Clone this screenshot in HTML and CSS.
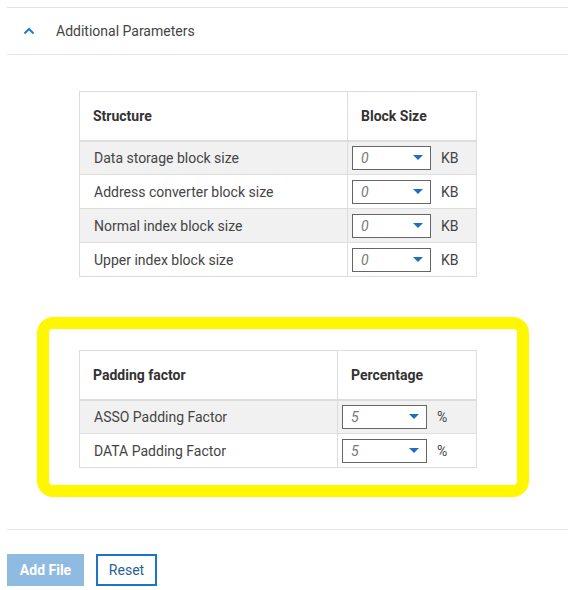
FILE: index.html
```html
<!DOCTYPE html>
<html lang="en">
<head>
    <meta charset="UTF-8">
    <title>Additional Parameters</title>
    <link rel="stylesheet" href="styles.css">
</head>
<body>
    <div class="panel">
        <!-- Section header -->
        <div class="section-head">
            <span class="chevron">
                <svg width="12" height="8" viewBox="0 0 12 8"><path d="M1.5 6.5 L6 2 L10.5 6.5" fill="none" stroke="#1e7bd0" stroke-width="2"/></svg>
            </span>
            <span class="section-title">Additional Parameters</span>
        </div>

        <div class="section-body">
            <!-- Block size table -->
            <table class="param-table block-table">
                <thead>
                    <tr><th class="col-name">Structure</th><th>Block Size</th></tr>
                </thead>
                <tbody>
                    <tr>
                        <td>Data storage block size</td>
                        <td><div class="cell-input"><div class="select"><span>0</span><i class="caret"></i></div><span class="unit">KB</span></div></td>
                    </tr>
                    <tr>
                        <td>Address converter block size</td>
                        <td><div class="cell-input"><div class="select"><span>0</span><i class="caret"></i></div><span class="unit">KB</span></div></td>
                    </tr>
                    <tr>
                        <td>Normal index block size</td>
                        <td><div class="cell-input"><div class="select"><span>0</span><i class="caret"></i></div><span class="unit">KB</span></div></td>
                    </tr>
                    <tr>
                        <td>Upper index block size</td>
                        <td><div class="cell-input"><div class="select"><span>0</span><i class="caret"></i></div><span class="unit">KB</span></div></td>
                    </tr>
                </tbody>
            </table>

            <!-- Padding factor table (highlighted) -->
            <div class="highlight">
                <table class="param-table padding-table">
                    <thead>
                        <tr><th class="col-name">Padding factor</th><th>Percentage</th></tr>
                    </thead>
                    <tbody>
                        <tr>
                            <td>ASSO Padding Factor</td>
                            <td><div class="cell-input"><div class="select wide"><span>5</span><i class="caret"></i></div><span class="unit">%</span></div></td>
                        </tr>
                        <tr>
                            <td>DATA Padding Factor</td>
                            <td><div class="cell-input"><div class="select wide"><span>5</span><i class="caret"></i></div><span class="unit">%</span></div></td>
                        </tr>
                    </tbody>
                </table>
            </div>
        </div>

        <div class="actions">
            <button type="button" class="btn btn-primary">Add File</button>
            <button type="button" class="btn btn-outline">Reset</button>
        </div>
    </div>
</body>
</html>
```

FILE: styles.css
```css
* {
    margin: 0;
    padding: 0;
    box-sizing: border-box;
}

body {
    font-family: Roboto, "Liberation Sans", Arial, sans-serif;
    background: #fff;
    color: #444;
}

.panel {
    margin: 7px 0 0 7px;
}

.section-head {
    display: flex;
    align-items: center;
    height: 48px;
    border-top: 1px solid #e3e3e3;
    border-bottom: 1px solid #e3e3e3;
}

.chevron {
    display: flex;
    width: 49px;
    padding-left: 16px;
}

.section-title {
    font-size: 14px;
    color: #444;
}

.section-body {
    padding: 36px 0 32px;
    border-bottom: 1px solid #e3e3e3;
}

.param-table {
    border-collapse: collapse;
    border: 1px solid #ddd;
    font-size: 14px;
    margin-left: 72px;
    width: 398px;
}

.param-table th {
    height: 49px;
    text-align: left;
    font-weight: bold;
    color: #333;
    padding: 0 13px;
    border-left: 1px solid #ddd;
    border-bottom: 2px solid #ddd;
}

.param-table td {
    height: 34px;
    padding: 0 14px;
    border-left: 1px solid #ddd;
    border-bottom: 1px solid #ddd;
}

.param-table td + td {
    padding: 0 4px;
}

.param-table tbody tr:nth-child(odd) {
    background: #f1f1f1;
}

.block-table .col-name {
    width: 268px;
}

.padding-table .col-name {
    width: 258px;
}

.cell-input {
    display: flex;
    align-items: center;
}

.select {
    display: flex;
    align-items: center;
    justify-content: space-between;
    width: 79px;
    height: 24px;
    padding: 0 7px 0 8px;
    border: 1px solid #666;
    background: #fff;
    font-style: italic;
    color: #777;
    font-size: 14px;
}

.select.wide {
    width: 85px;
}

.caret {
    width: 0;
    height: 0;
    border-left: 5px solid transparent;
    border-right: 5px solid transparent;
    border-top: 5px solid #1e6fc0;
}

.unit {
    margin-left: 10px;
    color: #444;
}

.highlight {
    margin: 40px 0 0 30px;
    width: 492px;
    padding: 21px 0 17px;
    border: 12px solid #fff700;
    border-radius: 16px;
}

.highlight .param-table {
    margin-left: 30px;
}

.actions {
    display: flex;
    gap: 12px;
    padding-top: 24px;
}

.btn {
    height: 32px;
    font-family: inherit;
    font-size: 14px;
    cursor: pointer;
}

.btn-primary {
    width: 77px;
    background: #8fbbe0;
    border: none;
    color: #fff;
    font-weight: bold;
}

.btn-outline {
    width: 61px;
    background: #fff;
    border: 2px solid #1b75c4;
    color: #2b5f95;
}
```
